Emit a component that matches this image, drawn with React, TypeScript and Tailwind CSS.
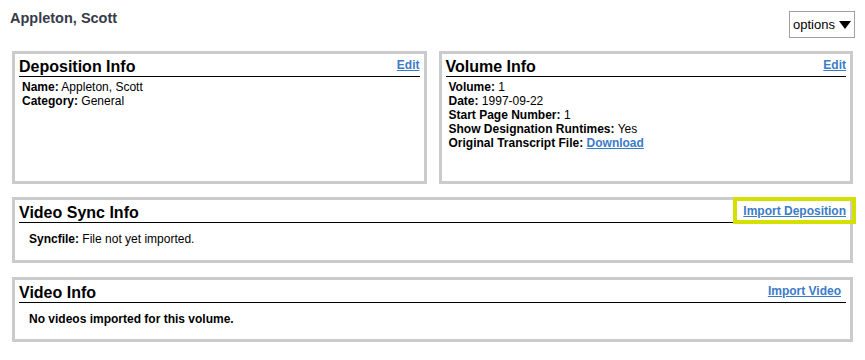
import React from "react";

const font = { fontFamily: '"Liberation Sans", Arial, Helvetica, sans-serif' };

function Header({ title, link, linkClass = "" }: { title: string; link: string; linkClass?: string }) {
  return (
    <div className="flex justify-between items-start border-b border-black pt-[4px]">
      <div className="text-[16px] leading-[18px] font-bold text-black">{title}</div>
      <a href="#" className={"text-[12px] leading-[14px] font-bold text-[#3b7bc8] underline " + linkClass}>
        {link}
      </a>
    </div>
  );
}

function Row({ label, children }: { label: string; children?: React.ReactNode }) {
  return (
    <div>
      <span className="font-bold">{label}</span> {children}
    </div>
  );
}

export default function App() {
  return (
    <div className="bg-white w-[865px] h-[360px] text-black" style={font}>
      <div className="flex justify-between items-start pl-[10px] pr-[10px]">
        <div className="mt-[10px] text-[14.5px] leading-[16px] font-bold text-[#363b4a]">Appleton, Scott</div>
        <div className="mt-[11px] h-[27px] w-[66px] border border-[#a0a0a0] flex items-center justify-center gap-[4px] text-[13px] text-black">
          <span>options</span>
          <svg width="12" height="8" viewBox="0 0 12 8">
            <path d="M0 0 H12 L6 8 Z" fill="#000" />
          </svg>
        </div>
      </div>

      <div className="px-[12px] mt-[13px]">
        <div className="flex gap-[12px]">
          <div className="flex-1 h-[133px] border-[3px] border-[#cbcbcb] px-[4px]">
            <Header title="Deposition Info" link="Edit" />
            <div className="pl-[3px] pt-[3px] text-[12px] leading-[14px]">
              <Row label="Name:">Appleton, Scott</Row>
              <Row label="Category:">General</Row>
            </div>
          </div>
          <div className="flex-1 h-[133px] border-[3px] border-[#cbcbcb] px-[4px]">
            <Header title="Volume Info" link="Edit" />
            <div className="pl-[3px] pt-[3px] text-[12px] leading-[14px]">
              <Row label="Volume:">1</Row>
              <Row label="Date:">1997-09-22</Row>
              <Row label="Start Page Number:">1</Row>
              <Row label="Show Designation Runtimes:">Yes</Row>
              <Row label="Original Transcript File:">
                <a href="#" className="font-bold text-[#3b7bc8] underline">Download</a>
              </Row>
            </div>
          </div>
        </div>

        <div className="relative mt-[13px] h-[66px] border-[3px] border-[#cbcbcb] px-[4px]">
          <Header title="Video Sync Info" link="Import Deposition" />
          <div className="pl-[10px] pt-[9px] text-[12px] leading-[14px]">
            <Row label="Syncfile:">File not yet imported.</Row>
          </div>
          <div className="absolute top-[-3px] right-[-6px] w-[123px] h-[27px] border-[4px] border-[#d4e000]" />
        </div>

        <div className="mt-[14px] h-[65px] border-[3px] border-[#cbcbcb] px-[4px]">
          <Header title="Video Info" link="Import Video" linkClass="mr-[5px]" />
          <div className="pl-[10px] pt-[9px] text-[12px] leading-[14px] font-bold">
            No videos imported for this volume.
          </div>
        </div>
      </div>
    </div>
  );
}
